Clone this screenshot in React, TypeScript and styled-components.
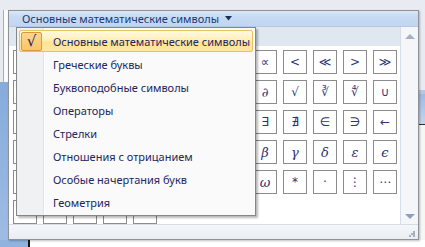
import React from 'react';
import styled, { createGlobalStyle } from 'styled-components';

const GlobalStyle = createGlobalStyle`
  html, body {
    margin: 0;
    padding: 0;
    overflow: hidden;
  }
`;

const UI_FONT = `'Noto Sans', 'Open Sans', sans-serif`;

// the Word window behind the popup gallery
const Screen = styled.div`
  position: relative;
  width: 425px;
  height: 247px;
  overflow: hidden;
  font-family: ${UI_FONT};
  background:
    linear-gradient(#8fb2df, #8fb2df) 0 240px / 28px 7px no-repeat,
    linear-gradient(#151515, #151515) 28px 240px / 2px 7px no-repeat,
    linear-gradient(#ffffff, #ffffff) 30px 240px / 395px 7px no-repeat,
    linear-gradient(#86abdc, #9fbce4) 0 82px / 8px 165px no-repeat,
    linear-gradient(#b4c8e4, #b4c8e4) 419px 90px / 6px 4px no-repeat,
    linear-gradient(#9fbbe2, #c3d5ee) 419px 94px / 6px 30px no-repeat,
    linear-gradient(#303030, #303030) 419px 124px / 6px 1px no-repeat,
    linear-gradient(#f6f6f6, #f6f6f6) 419px 125px / 6px 122px no-repeat,
    linear-gradient(#a8aab4, #a8aab4) 3px 10px / 1px 72px no-repeat,
    linear-gradient(#fafbfd, #fafbfd) 4px 10px / 4px 72px no-repeat,
    #e9ebf2;
`;

const Panel = styled.div`
  position: absolute;
  left: 8px;
  top: 10px;
  width: 409px;
  height: 228px;
  border: 1px solid #8e9196;
  box-shadow: 1px 1px 2px rgba(0, 0, 0, 0.25);
  display: flex;
  flex-direction: column;
  background: #ffffff;
`;

const Header = styled.div`
  height: 15px;
  display: flex;
  align-items: center;
  gap: 6px;
  padding-left: 13px;
  background: linear-gradient(#dbe8f8, #c6daf3 40%, #c2d6f1);
  border-bottom: 1px solid #b7c9e2;
  color: #1b3a73;
  font-size: 11px;
  line-height: 15px;
  white-space: nowrap;
`;

const Body = styled.div`
  flex: 1;
  display: flex;
  min-height: 0;
`;

const Gallery = styled.div`
  flex: 1;
  display: flex;
  flex-direction: column;
`;

const CategoryBar = styled.div`
  height: 20px;
  background: #dfe7f1;
`;

const SymbolGrid = styled.div`
  flex: 1;
  display: grid;
  grid-template-columns: repeat(13, 24px);
  grid-auto-rows: 24px;
  gap: 6px;
  align-content: start;
  padding: 4px 0 0 4px;
  background: #ffffff;
`;

const SymbolButton = styled.div<{ $greek?: boolean }>`
  box-sizing: border-box;
  border: 1px solid #8c8c8c;
  background: #ffffff;
  display: flex;
  align-items: center;
  justify-content: center;
  color: #2d3577;
  font-family: ${(p) =>
    p.$greek ? `'DejaVu Serif', 'Liberation Serif', serif` : `'DejaVu Sans', sans-serif`};
  font-style: ${(p) => (p.$greek ? 'italic' : 'normal')};
  font-size: ${(p) => (p.$greek ? '13px' : '12px')};
  line-height: 1;
`;

const Scrollbar = styled.div`
  width: 18px;
  display: flex;
  flex-direction: column;
  align-items: center;
  justify-content: space-between;
  padding: 7px 0 5px;
  box-sizing: border-box;
  background: #f4f6f9;
  border-left: 1px solid #d7dde6;
`;

const Footer = styled.div`
  height: 12px;
  display: flex;
  justify-content: flex-end;
  align-items: flex-end;
  padding: 0 3px 2px 0;
  background: linear-gradient(#f5f7fa, #e9edf2);
  border-top: 1px solid #d6dce4;
`;

const Menu = styled.div`
  position: absolute;
  left: 16px;
  top: 27px;
  width: 236px;
  padding: 1px;
  box-sizing: content-box;
  border: 1px solid #868686;
  box-shadow: 2px 2px 2px rgba(0, 0, 0, 0.28);
  background:
    linear-gradient(#e2e3e3, #e2e3e3) 26px 0 / 1px 100% no-repeat,
    linear-gradient(#ffffff, #ffffff) 27px 0 / 1px 100% no-repeat,
    linear-gradient(#f0f1f2, #f0f1f2) 0 0 / 26px 100% no-repeat,
    #fafafa;
`;

const MenuItem = styled.div<{ $active?: boolean }>`
  height: 22px;
  margin: 1px 0 1px 1px;
  width: 234px;
  box-sizing: border-box;
  display: flex;
  align-items: center;
  border: 1px solid ${(p) => (p.$active ? '#e5c365' : 'transparent')};
  border-radius: 2px;
  background: ${(p) =>
    p.$active ? 'linear-gradient(#fff9e0, #ffefb8 45%, #ffe394 55%, #ffe7a4)' : 'transparent'};
  color: #1d2660;
  font-size: 11px;
  white-space: nowrap;
`;

const CheckCell = styled.div<{ $checked?: boolean }>`
  flex-shrink: 0;
  width: 21px;
  height: 19px;
  margin-left: 1px;
  box-sizing: border-box;
  display: flex;
  align-items: center;
  justify-content: center;
  border: 1px solid ${(p) => (p.$checked ? '#d99a3a' : 'transparent')};
  border-radius: 2px;
  background: ${(p) => (p.$checked ? 'linear-gradient(#fdd68e, #fbc468)' : 'transparent')};
  color: #1d2660;
  font-family: 'DejaVu Sans', sans-serif;
  font-size: 15px;
`;

const MenuLabel = styled.span`
  margin-left: 11px;
`;

const Arrow = ({ down }: { down?: boolean }) => (
  <svg width="10" height="5" viewBox="0 0 10 5">
    <polygon
      points={down ? '0,0 10,0 5,5' : '5,0 10,5 0,5'}
      fill={down ? '#8ea0b9' : '#a3b1c4'}
    />
  </svg>
);

const Caret = () => (
  <svg width="7" height="5" viewBox="0 0 7 5">
    <polygon points="0,0 7,0 3.5,4.5" fill="#1b2f5e" />
  </svg>
);

const Gripper = () => (
  <svg width="6" height="6" viewBox="0 0 6 6">
    <rect x="4" y="0" width="2" height="2" fill="#a5b0c0" />
    <rect x="2" y="2" width="2" height="2" fill="#a5b0c0" />
    <rect x="4" y="2" width="2" height="2" fill="#a5b0c0" />
    <rect x="0" y="4" width="2" height="2" fill="#a5b0c0" />
    <rect x="4" y="4" width="2" height="2" fill="#a5b0c0" />
  </svg>
);

// the first eight columns sit under the open menu, so they show no glyph
const symbols = [
  '', '', '', '', '', '', '', '', '∝', '<', '≪', '>', '≫',
  '', '', '', '', '', '', '', '', '∂', '√', '∛', '∜', '∪',
  '', '', '', '', '', '', '', '', '∃', '∄', '∈', '∋', '←',
  '', '', '', '', '', '', '', '', 'β', 'γ', 'δ', 'ε', 'ϵ',
  '', '', '', '', '', '', '', '', 'ω', '*', '·', '⋮', '⋯',
  '', '', '', '', '',
];

const greek = 'αβγδεϵθϑμπρστφω∂';

const categories = [
  'Основные математические символы',
  'Греческие буквы',
  'Буквоподобные символы',
  'Операторы',
  'Стрелки',
  'Отношения с отрицанием',
  'Особые начертания букв',
  'Геометрия',
];

export default function App() {
  return (
    <>
      <GlobalStyle />
      <Screen>
        <Panel>
          <Header>
            <span>Основные математические символы</span>
            <Caret />
          </Header>
          <Body>
            <Gallery>
              <CategoryBar />
              <SymbolGrid>
                {symbols.map((s, i) => (
                  <SymbolButton key={i} $greek={s !== '' && greek.includes(s)}>
                    {s}
                  </SymbolButton>
                ))}
              </SymbolGrid>
            </Gallery>
            <Scrollbar>
              <Arrow />
              <Arrow down />
            </Scrollbar>
          </Body>
          <Footer>
            <Gripper />
          </Footer>
        </Panel>

        <Menu>
          {categories.map((c, i) => (
            <MenuItem key={c} $active={i === 0}>
              <CheckCell $checked={i === 0}>{i === 0 ? '√' : ''}</CheckCell>
              <MenuLabel>{c}</MenuLabel>
            </MenuItem>
          ))}
        </Menu>
      </Screen>
    </>
  );
}
